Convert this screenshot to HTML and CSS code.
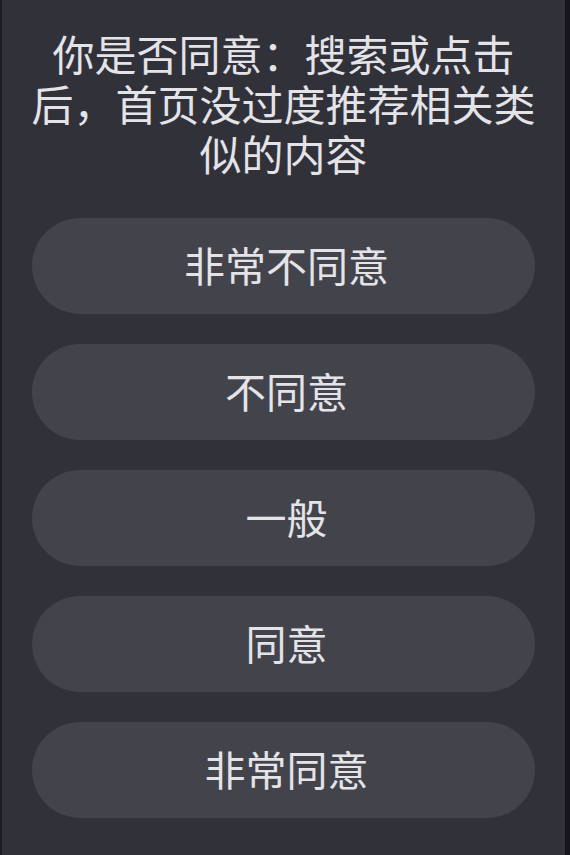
FILE: index.html
```html
<!DOCTYPE html>
<html lang="zh-CN">
<head>
    <meta charset="UTF-8">
    <meta name="viewport" content="width=570, height=855">
    <title>问卷</title>
    <link rel="stylesheet" href="styles.css">
</head>
<body>
    <div class="screen">
        <!-- Question text -->
        <div class="question">你是否同意：搜索或点击后，首页没过度推荐相关类似的内容</div>

        <!-- Answer options -->
        <div class="options">
            <button class="option">非常不同意</button>
            <button class="option">不同意</button>
            <button class="option">一般</button>
            <button class="option">同意</button>
            <button class="option">非常同意</button>
        </div>
    </div>
</body>
</html>
```
FILE: styles.css
```css
/* Page base */
body {
    margin: 0;
    background: #31313a;
    font-family: "Noto Sans CJK SC", "Noto Sans", sans-serif;
    color: #e3e3e8;
}

/* Main screen with the dark edges on both sides */
.screen {
    height: 855px;
    box-sizing: border-box;
    border-left: 2px solid #1c1c24;
    border-right: 5px solid #15151b;
    padding: 28px 0 0;
}

/* Question title */
.question {
    padding: 0 25px;
    font-size: 42px;
    line-height: 50px;
    text-align: center;
}

/* List of answer buttons */
.options {
    display: flex;
    flex-direction: column;
    gap: 30px;
    padding: 40px 30px 0;
}

.option {
    height: 96px;
    padding: 0 0 4px 6px;
    border: none;
    border-radius: 48px;
    background: #43434b;
    color: #e3e3e8;
    font-family: inherit;
    font-size: 41px;
    cursor: pointer;
}
```
